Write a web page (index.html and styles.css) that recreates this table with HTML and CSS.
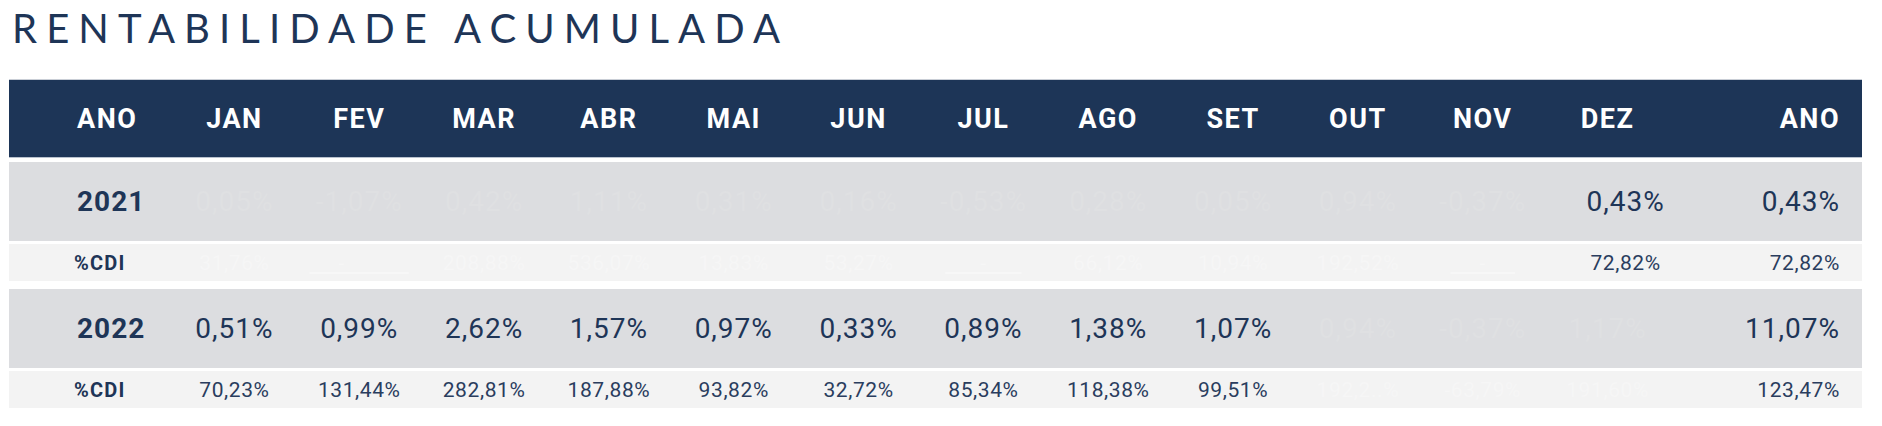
FILE: index.html
```html
<!DOCTYPE html>
<html lang="pt">
<head>
<meta charset="utf-8">
<title>Rentabilidade Acumulada</title>
<link rel="stylesheet" href="styles.css">
</head>
<body>
<div class="page">
  <h1 class="title">RENTABILIDADE ACUMULADA</h1>
  <div class="table">
    <div class="row head">
      <div class="cell lbl">ANO</div>
      <div class="cell">JAN</div>
      <div class="cell">FEV</div>
      <div class="cell">MAR</div>
      <div class="cell">ABR</div>
      <div class="cell">MAI</div>
      <div class="cell">JUN</div>
      <div class="cell">JUL</div>
      <div class="cell">AGO</div>
      <div class="cell">SET</div>
      <div class="cell">OUT</div>
      <div class="cell">NOV</div>
      <div class="cell">DEZ</div>
      <div class="cell last">ANO</div>
    </div>

    <div class="group">
      <div class="row year">
        <div class="cell lbl">2021</div>
        <div class="cell ghost">0,05%</div>
        <div class="cell ghost">-1,07%</div>
        <div class="cell ghost">0,42%</div>
        <div class="cell ghost">1,11%</div>
        <div class="cell ghost">0,31%</div>
        <div class="cell ghost">0,16%</div>
        <div class="cell ghost">-0,53%</div>
        <div class="cell ghost">0,28%</div>
        <div class="cell ghost">0,05%</div>
        <div class="cell ghost">0,94%</div>
        <div class="cell ghost">-0,37%</div>
        <div class="cell shift">0,43%</div>
        <div class="cell last">0,43%</div>
      </div>
      <div class="row cdi">
        <div class="cell lbl">%CDI</div>
        <div class="cell ghost">31,76%</div>
        <div class="cell ghost"><span class="ul">&nbsp;&nbsp;&nbsp;&nbsp;&nbsp;-&nbsp;&nbsp;&nbsp;&nbsp;&nbsp;&nbsp;&nbsp;&nbsp;&nbsp;&nbsp;&nbsp;</span></div>
        <div class="cell ghost">208,88%</div>
        <div class="cell ghost">536,07%</div>
        <div class="cell ghost">13,83%</div>
        <div class="cell ghost">53,27%</div>
        <div class="cell ghost"><span class="ul">&nbsp;&nbsp;&nbsp;&nbsp;&nbsp;&nbsp;-&nbsp;&nbsp;&nbsp;&nbsp;&nbsp;&nbsp;</span></div>
        <div class="cell ghost">66,12%</div>
        <div class="cell ghost">10,94%</div>
        <div class="cell ghost">192,52%</div>
        <div class="cell ghost"><span class="ul">&nbsp;&nbsp;&nbsp;&nbsp;&nbsp;-&nbsp;&nbsp;&nbsp;&nbsp;&nbsp;</span></div>
        <div class="cell shift">72,82%</div>
        <div class="cell last">72,82%</div>
      </div>
    </div>

    <div class="group">
      <div class="row year">
        <div class="cell lbl">2022</div>
        <div class="cell">0,51%</div>
        <div class="cell">0,99%</div>
        <div class="cell">2,62%</div>
        <div class="cell">1,57%</div>
        <div class="cell">0,97%</div>
        <div class="cell">0,33%</div>
        <div class="cell">0,89%</div>
        <div class="cell">1,38%</div>
        <div class="cell">1,07%</div>
        <div class="cell ghost">0,94%</div>
        <div class="cell ghost">-0,37%</div>
        <div class="cell ghost">1,17%</div>
        <div class="cell last">11,07%</div>
      </div>
      <div class="row cdi">
        <div class="cell lbl">%CDI</div>
        <div class="cell">70,23%</div>
        <div class="cell">131,44%</div>
        <div class="cell">282,81%</div>
        <div class="cell">187,88%</div>
        <div class="cell">93,82%</div>
        <div class="cell">32,72%</div>
        <div class="cell">85,34%</div>
        <div class="cell">118,38%</div>
        <div class="cell">99,51%</div>
        <div class="cell ghost">192,2..%</div>
        <div class="cell ghost">-63,79%</div>
        <div class="cell ghost">191,60%</div>
        <div class="cell last">123,47%</div>
      </div>
    </div>
  </div>
</div>
</body>
</html>
```

FILE: styles.css
```css
html, body {
  margin: 0;
  padding: 0;
  background: #ffffff;
}

.page {
  width: 1853px;
  margin-left: 9px;
  font-family: Roboto, "Liberation Sans", sans-serif;
  color: #1e3557;
}

.title {
  margin: 0;
  height: 79px;
  padding: 8px 0 0 3px;
  box-sizing: border-box;
  font-family: Lato, "Open Sans", sans-serif;
  font-weight: 400;
  font-size: 40px;
  line-height: 40px;
  letter-spacing: 9.1px;
  color: #1e3557;
  white-space: nowrap;
}

.table {
  display: flex;
  flex-direction: column;
}

.row {
  display: grid;
  grid-template-columns: 163px repeat(12, 1fr) 192px;
  align-items: center;
}

.cell {
  text-align: center;
  white-space: nowrap;
}

.cell.lbl {
  text-align: left;
  padding-left: 68px;
  font-weight: 700;
}

.cell.last {
  text-align: right;
  padding-right: 22px;
}

.cell.shift {
  padding-left: 36px;
}

.head {
  height: 79px;
  box-sizing: border-box;
  background: #1d3557;
  border-top: 1px solid #c9ced6;
  border-bottom: 1px solid #b9c2cf;
  color: #ffffff;
  font-weight: 700;
  font-size: 27px;
  letter-spacing: 1.5px;
  margin-bottom: 4px;
}

.group {
  display: flex;
  flex-direction: column;
  gap: 3px;
  margin-bottom: 8px;
}

.year {
  height: 79px;
  background: #dcdde0;
  font-size: 28px;
  letter-spacing: 1px;
}

.cdi {
  height: 37px;
  background: #f3f3f3;
  font-size: 21px;
  letter-spacing: 0.6px;
  color: #2a3d5e;
}

.cdi .cell.lbl {
  font-size: 20px;
  padding-left: 65px;
  letter-spacing: 1.2px;
  color: #1e3557;
}

.year .ghost {
  color: #dfe0e2;
}

.cdi .ghost {
  color: #f6f6f6;
}

.ul {
  text-decoration: underline;
  text-decoration-color: #f7f7f7;
}
```
